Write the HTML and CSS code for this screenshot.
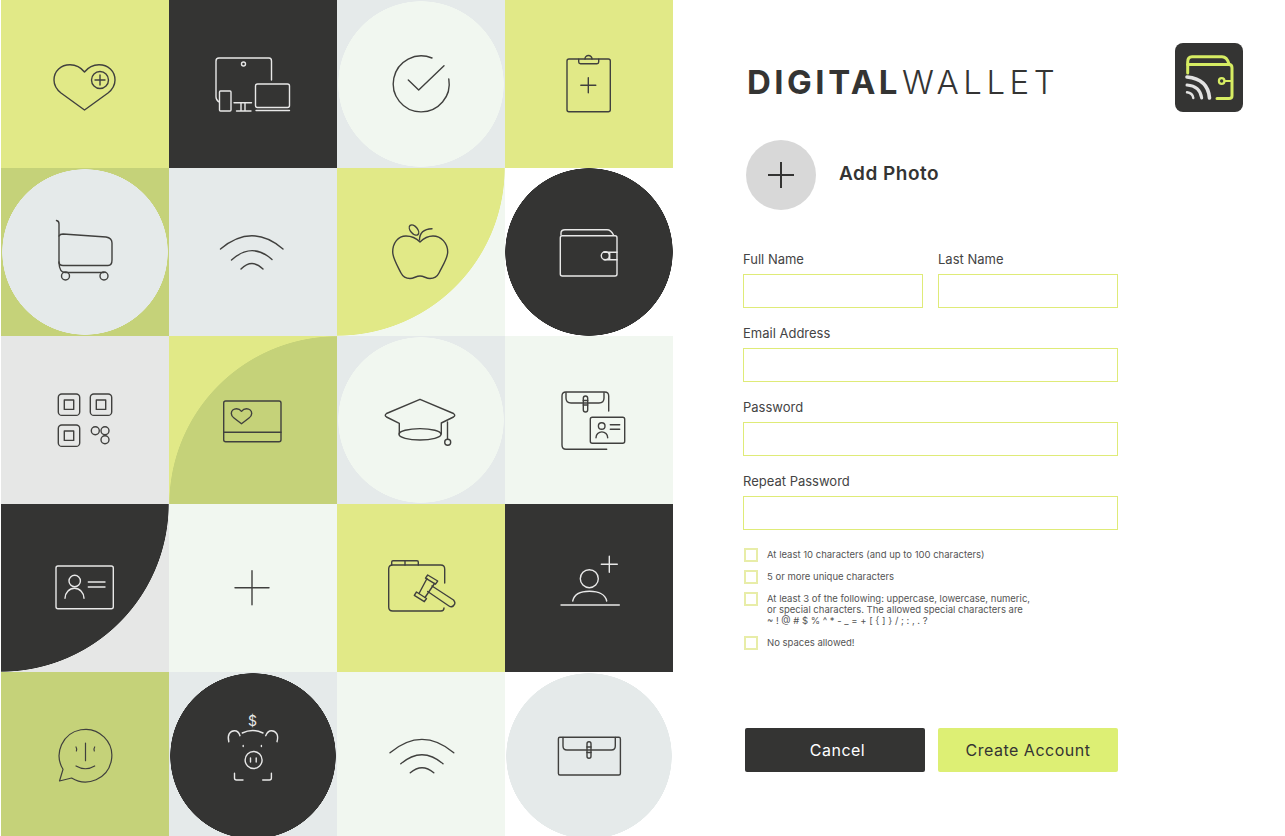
FILE: index.html
```html
<!DOCTYPE html>
<html lang="en">
<head>
    <meta charset="UTF-8">
    <meta name="viewport" content="width=device-width, initial-scale=1.0">
    <title>Digital Wallet - Create Account</title>
    <link rel="stylesheet" href="styles.css">
</head>
<body>
    <div class="mosaic">
        <!-- row 1 -->
        <div class="cell lime">
            <svg class="icon" viewBox="1 0 168 168">
                <path d="M84.5 110 L61 93 C56 89 54 85 54 80 C54 71 61 64.7 70 64.7 C76 64.7 81 67.5 84.5 72 C88 67.5 93 64.7 99 64.7 C108 64.7 115 71 115 80 C115 85 113 89 108 93 Z"/>
                <circle cx="100" cy="80" r="8.5"/>
                <path d="M95 80 H105 M100 75 V85"/>
            </svg>
        </div>
        <div class="cell dark">
            <svg class="icon light" viewBox="169 0 168 168">
                <path d="M271.5 80 V61 Q271.5 58 269 58 H219 Q216 58 216 61 V97 Q216 100 219 102"/>
                <circle cx="243.5" cy="64" r="2"/>
                <rect x="219.5" y="91" width="11.5" height="20" rx="1"/>
                <path d="M234 102.7 H251.5 M241 103 V110.5 M245 103 V110.5 M236.5 111 H251"/>
                <rect x="255.5" y="84" width="34" height="23.5" rx="2"/>
                <path d="M256 110.5 H289.5"/>
            </svg>
        </div>
        <div class="cell disc-pale">
            <svg class="icon" viewBox="337 0 168 168">
                <path d="M432 58 A28 28 0 1 0 448.8 79"/>
                <path d="M408.3 80 L418.7 90 L444 65.7"/>
            </svg>
        </div>
        <div class="cell lime">
            <svg class="icon" viewBox="505 0 168 168">
                <rect x="567" y="59" width="43.3" height="52.7" rx="2"/>
                <path d="M578.7 59.3 V62 Q578.7 63.7 580.5 63.7 H597 Q598.7 63.7 598.7 62 V59.3"/>
                <path d="M585 59 A3.5 3.5 0 0 1 592 59"/>
                <path d="M580.8 85.3 H595.8 M588.3 77.8 V92.8"/>
            </svg>
        </div>

        <!-- row 2 -->
        <div class="cell disc-mist">
            <svg class="icon" viewBox="1 168 168 168">
                <path d="M56.5 220.5 Q59 221 59 224 V263 Q59.5 272.5 65 272.5 H104"/>
                <path d="M59 236 Q60 234 63 234 L106 237 Q112 238 112 243 V260 Q112 265.5 108 265.5 H63 Q59 265.5 59 262"/>
                <circle cx="65.5" cy="276" r="4"/>
                <circle cx="104" cy="276" r="4"/>
            </svg>
        </div>
        <div class="cell mist">
            <svg class="icon" viewBox="169 168 168 168">
                <path d="M220.5 249 Q252 222.5 283 249"/>
                <path d="M231.5 260 Q252 241.5 272 259.5"/>
                <path d="M241 269 Q252 258 263 269"/>
            </svg>
        </div>
        <div class="cell corner-lime">
            <svg class="icon" viewBox="337 168 168 168">
                <path d="M420 242 C416 238 412 236 406 236 C398 236 392.7 243 392.7 252 C392.7 258 397 265 401 273 C403 277 406 278.5 410 278.5 C414 278.5 416 276 420 276 C424 276 426 278.5 430 278.5 C434 278.5 437 277 439 273 C443 265 447.7 258 447.7 252 C447.7 243 441 236 433 236 C428 236 424 238 420 242 Z"/>
                <path d="M419.5 240 C419.5 233 424 229 432 228.7"/>
                <ellipse cx="414" cy="230" rx="6" ry="3.5" transform="rotate(50 414 230)"/>
            </svg>
        </div>
        <div class="cell disc-dark">
            <svg class="icon light" viewBox="505 168 168 168">
                <rect x="560.3" y="235.7" width="56.7" height="40.3" rx="2"/>
                <path d="M561 235 V233 Q561 229.7 565 229.7 H607 Q611 229.7 613.5 235"/>
                <circle cx="605.3" cy="255.7" r="4"/>
                <path d="M604 252.3 H617 M604 259.7 H617 M609.7 252.3 V259.7"/>
            </svg>
        </div>

        <!-- row 3 -->
        <div class="cell ash">
            <svg class="icon" viewBox="1 336 168 168">
                <rect x="58.3" y="394" width="21.4" height="21.4" rx="3.5"/>
                <rect x="64.3" y="400" width="9.4" height="9.4"/>
                <rect x="90.3" y="394" width="21.4" height="21.4" rx="3.5"/>
                <rect x="96.3" y="400" width="9.4" height="9.4"/>
                <rect x="58.3" y="425" width="21.4" height="21.4" rx="3.5"/>
                <rect x="64.3" y="431" width="9.4" height="9.4"/>
                <circle cx="95.3" cy="430.7" r="4"/>
                <circle cx="105" cy="430.7" r="4"/>
                <circle cx="105" cy="439.7" r="4"/>
            </svg>
        </div>
        <div class="cell corner-olive">
            <svg class="icon" viewBox="169 336 168 168">
                <rect x="223.7" y="401" width="57.3" height="40.7" rx="2"/>
                <path d="M223.7 432.3 H281"/>
                <path d="M241.5 423.7 L234 418 C232 416.5 231.3 415 231.3 413.5 C231.3 410.7 233.7 408.7 236.5 408.7 C238.5 408.7 240.3 409.7 241.5 411.3 C242.7 409.7 244.5 408.7 246.5 408.7 C249.3 408.7 251.7 410.7 251.7 413.5 C251.7 415 251 416.5 249 418 Z"/>
            </svg>
        </div>
        <div class="cell disc-pale">
            <svg class="icon" viewBox="337 336 168 168">
                <path d="M399.3 434 V423.3 L386.5 417 Q384 415.3 386.5 413.5 L420 399.3 L453.5 413.5 Q456 415.3 453.5 417 L441.3 423 V434"/>
                <ellipse cx="420" cy="434.3" rx="21" ry="5.7"/>
                <path d="M447.5 422 V439.3"/>
                <circle cx="447.7" cy="442.3" r="3"/>
            </svg>
        </div>
        <div class="cell pale">
            <svg class="icon" viewBox="505 336 168 168">
                <path d="M608.7 411 V396 Q608.7 392 604.7 392 H566 Q562 392 562 396 V445 Q562 449.3 566 449.3 H606.7"/>
                <path d="M566 392.7 V398 Q566 403 571 403 H599 Q604 403 604 398 V392.7"/>
                <rect x="583.3" y="396" width="4.4" height="16" rx="2.2"/>
                <path d="M583.3 400.5 H587.7 M583.3 405 H587.7"/>
                <rect x="590.3" y="417.3" width="34.4" height="26" rx="2"/>
                <circle cx="601.7" cy="426" r="3.3"/>
                <path d="M596 437.7 A5.8 5.8 0 0 1 607.7 437.7"/>
                <path d="M610.3 424.7 H619.7 M610.3 429.3 H619.7"/>
            </svg>
        </div>

        <!-- row 4 -->
        <div class="cell corner-dark">
            <svg class="icon light" viewBox="1 504 168 168">
                <rect x="56" y="566" width="57.3" height="42.7" rx="2"/>
                <circle cx="74.7" cy="581" r="5.7"/>
                <path d="M65 598.3 A9.5 10 0 0 1 84 598.3"/>
                <path d="M88.3 582 H105 M88.3 587 H105"/>
            </svg>
        </div>
        <div class="cell pale">
            <svg class="icon" viewBox="169 504 168 168">
                <path d="M235 587.7 H269 M252 570.7 V604.7"/>
            </svg>
        </div>
        <div class="cell lime">
            <svg class="icon" viewBox="337 504 168 168">
                <path d="M444.7 583 V569 Q444.7 565 440.7 565 H392.7 Q388.7 565 388.7 569 V607 Q388.7 611 392.7 611 H441 Q444 611 444 608"/>
                <path d="M391.7 565 V562 Q391.7 560.7 393 560.7 H417 Q418.3 560.7 418.3 562 V565 M405 560.7 V565"/>
                <path d="M427.7 575 L437.7 581 L435.5 584.2 L425.5 578.2 Z"/>
                <path d="M416.5 592 L426.5 598.5 L424.3 601.7 L414.3 595.3 Z"/>
                <path d="M427 578.5 L419 593.5 M434.5 583.5 L425 597.5"/>
                <path d="M432 586 L453.5 600 Q456 603 454 605 Q452 608 449 606 L427.7 591.5"/>
            </svg>
        </div>
        <div class="cell dark">
            <svg class="icon light" viewBox="505 504 168 168">
                <circle cx="589.3" cy="578.7" r="9"/>
                <path d="M572.7 601 C574 595 580 591.3 589.5 591.3 C599 591.3 605.5 595 606.7 601"/>
                <path d="M561 605 H619.3"/>
                <path d="M601.3 564.3 H617.3 M609.3 556.3 V572.3"/>
            </svg>
        </div>

        <!-- row 5, cut off by the window -->
        <div class="cell olive">
            <svg class="icon thin" viewBox="1 672 168 168">
                <path d="M63 769.3 A26.3 26.3 0 1 1 71.6 778 L59.5 781 Z"/>
                <path d="M76 747 Q77.3 749 76.4 751 M94.7 747 Q93.4 749 94.3 751"/>
                <path d="M85.5 743 V760.7"/>
                <path d="M76 766 Q85.5 771.5 94.7 766"/>
            </svg>
        </div>
        <div class="cell disc-dark-mist">
            <svg class="icon light" viewBox="169 672 168 168">
                <text class="coin" x="252.5" y="726">$</text>
                <path d="M228.8 741.7 C227 735 230 730.7 234.5 730.7 C237 730.7 239 732.5 240 735.7"/>
                <path d="M277 741.7 C279 735 276 730.7 271.4 730.7 C269 730.7 267 732.5 265.7 735.7"/>
                <path d="M242.3 733 Q252.6 728 263 733"/>
                <path d="M243.2 745.4 V746.6 M261.4 745.4 V746.6"/>
                <circle cx="253.6" cy="760" r="8.5"/>
                <path d="M250.5 758 V762 M256.2 758 V762"/>
                <path d="M234.5 773.3 V778 Q234.5 780 236.5 780 H243 M271.4 773.3 V778 Q271.4 780 269.4 780 H262.7"/>
            </svg>
        </div>
        <div class="cell pale">
            <svg class="icon" viewBox="337 672 168 168">
                <path d="M390 752.7 Q422 726 453.8 752.7"/>
                <path d="M400.8 763.7 Q422 745.7 443 763.7"/>
                <path d="M410.3 772.7 Q422 762.7 433.8 772.7"/>
            </svg>
        </div>
        <div class="cell disc-mist-white">
            <svg class="icon" viewBox="505 672 168 168">
                <rect x="558.4" y="737.3" width="62" height="37.7" rx="1.5"/>
                <path d="M563 737.5 V746 Q563 750 567 750 H611.3 Q615.3 750 615.3 746 V737.5"/>
                <rect x="587" y="741.7" width="4" height="16.6" rx="2"/>
                <path d="M587 747 H591 M587 752.5 H591"/>
            </svg>
        </div>
    </div>

    <main class="panel">
        <header class="panel-head">
            <h1 class="brand"><b>DIGITAL</b>WALLET</h1>
            <svg class="logo" viewBox="1175 43 68 69">
                <rect x="1175" y="43" width="68" height="69" rx="8" fill="#343433"/>
                <g fill="none" stroke="#d6ec63" stroke-width="3" stroke-linecap="round">
                    <path d="M1187.7 73 V62 Q1187.7 56.7 1192 56.7 H1222 Q1227 56.7 1229 64"/>
                    <path d="M1187.7 64.5 H1229 Q1232 64.5 1232 68 V96 Q1232 98.5 1229 98.5 H1217"/>
                    <circle cx="1221.7" cy="81" r="2.8" stroke-width="2.2"/>
                    <path d="M1224.5 81 H1232" stroke-width="2.2"/>
                </g>
                <g fill="none" stroke="#e2e2e2" stroke-linecap="round">
                    <path d="M1187 77 Q1208 79 1209.5 98" stroke-width="3.6"/>
                    <path d="M1187 85 Q1200 86 1201.7 98" stroke-width="3"/>
                    <path d="M1187 92.3 Q1192.5 93 1193.3 98" stroke-width="2.4"/>
                </g>
            </svg>
        </header>

        <div class="add-photo">
            <span class="photo-btn">
                <svg class="photo-plus" viewBox="0 0 28 28"><path d="M1 14 H27 M14 1 V27"/></svg>
            </span>
            <span class="photo-label">Add Photo</span>
        </div>

        <form class="signup">
            <div class="row">
                <label class="field">Full Name<input type="text"></label>
                <label class="field">Last Name<input type="text"></label>
            </div>
            <label class="field">Email Address<input type="email"></label>
            <label class="field">Password<input type="password"></label>
            <label class="field">Repeat Password<input type="password"></label>

            <ul class="rules">
                <li><input type="checkbox"><span>At least 10 characters (and up to 100 characters)</span></li>
                <li><input type="checkbox"><span>5 or more unique characters</span></li>
                <li><input type="checkbox"><span>At least 3 of the following: uppercase, lowercase, numeric,<br>or special characters. The allowed special characters are<br>~ ! @ # $ % ^ * - _ = + [ { ] } / ; : , . ?</span></li>
                <li><input type="checkbox"><span>No spaces allowed!</span></li>
            </ul>

            <div class="actions">
                <button type="button" class="btn btn-cancel">Cancel</button>
                <button type="submit" class="btn btn-create">Create Account</button>
            </div>
        </form>
    </main>
</body>
</html>
```

FILE: styles.css
```css
body {
    margin: 0;
    height: 836px;
    display: flex;
    overflow: hidden;
    background: white;
    font-family: Inter, "Noto Sans", sans-serif;
    color: #343433;
}

/* left picture wall */
.mosaic {
    flex: none;
    height: 836px;
    padding-left: 1px;
    display: grid;
    grid-template-columns: repeat(4, 168px);
    grid-auto-rows: 168px;
    overflow: hidden;
}
.cell {
    display: flex;
}
.lime { background: #e1e987; }
.dark { background: #343433; }
.mist { background: #e5eaea; }
.pale { background: #f1f7f0; }
.ash { background: #e6e7e6; }
.olive { background: #c5d279; }
.disc-pale { background: radial-gradient(circle 83px, #f1f7f0 99.4%, #e5eaea 100%); }
.disc-mist { background: radial-gradient(circle 83px, #e5eaea 99.4%, #c5d279 100%); }
.disc-dark { background: radial-gradient(circle 84px, #343433 99.4%, white 100%); }
.disc-dark-mist { background: radial-gradient(circle 83px, #343433 99.4%, #e5eaea 100%); }
.disc-mist-white { background: radial-gradient(circle 83px, #e5eaea 99.4%, white 100%); }
.corner-lime { background: radial-gradient(circle 168px at 0 0, #e1e987 99.6%, #f1f7f0 100%); }
.corner-olive { background: radial-gradient(circle 168px at 100% 100%, #c5d279 99.6%, #e1e987 100%); }
.corner-dark { background: radial-gradient(circle 168px at 0 0, #343433 99.6%, #e6e7e6 100%); }

.icon {
    display: block;
    width: 168px;
    height: 168px;
    fill: none;
    stroke: #40403e;
    stroke-width: 1.4;
    stroke-linecap: round;
    stroke-linejoin: round;
}
.icon.light { stroke: #e8e8e8; }
.icon.thin { stroke-width: 1.2; }
.coin {
    fill: #e8e8e8;
    stroke: none;
    font-size: 14px;
    text-anchor: middle;
}

/* right form panel */
.panel {
    flex: none;
    width: 612px;
    box-sizing: border-box;
    padding: 43px 42px 0 70px;
}
.panel-head {
    display: flex;
    justify-content: space-between;
    align-items: flex-start;
    height: 97px;
}
.brand {
    margin: 19px 0 0 4px;
    font-size: 33px;
    line-height: 40px;
    font-weight: 300;
    letter-spacing: 4.5px;
    color: #343433;
}
.brand b {
    font-weight: 700;
    letter-spacing: 3.5px;
    margin-right: 1px;
}
.logo {
    width: 68px;
    height: 69px;
}

.add-photo {
    display: flex;
    align-items: center;
    gap: 23px;
    margin-left: 3px;
}
.photo-btn {
    width: 70px;
    height: 70px;
    border-radius: 50%;
    background: #d8d8d8;
    display: flex;
    align-items: center;
    justify-content: center;
}
.photo-plus {
    width: 28px;
    height: 28px;
    fill: none;
    stroke: #343433;
    stroke-width: 2;
}
.photo-label {
    margin-bottom: 3px;
    font-size: 19px;
    font-weight: 600;
    letter-spacing: 0.5px;
}

.signup {
    width: 375px;
    margin-top: 40px;
    display: flex;
    flex-direction: column;
    gap: 16px;
}
.row {
    display: flex;
    gap: 15px;
}
.row .field {
    flex: 1;
}
.field {
    display: block;
    font-size: 13px;
    line-height: 18px;
    color: #444;
}
.field input {
    display: block;
    box-sizing: border-box;
    width: 100%;
    height: 34px;
    margin: 6px 0 0;
    padding: 0 8px;
    border: 1px solid #dfeb78;
    border-radius: 0;
    background: white;
}

.rules {
    list-style: none;
    margin: 2px 0 0 1px;
    padding: 0;
    display: flex;
    flex-direction: column;
    gap: 8px;
    font-size: 9.5px;
    line-height: 11px;
    color: #555;
}
.rules li {
    display: flex;
    gap: 9px;
    min-height: 14px;
}
.rules input {
    appearance: none;
    flex: none;
    box-sizing: border-box;
    width: 14px;
    height: 14px;
    margin: 0;
    border: 2px solid #e8eda8;
}
.rules span {
    padding: 0.5px 0 2.5px;
}

.actions {
    display: flex;
    gap: 13px;
    margin-top: 62px;
    margin-left: 2px;
}
.btn {
    flex: none;
    width: 180px;
    height: 44px;
    box-sizing: border-box;
    border: none;
    border-radius: 2px;
    font-family: inherit;
    font-size: 16px;
    letter-spacing: 0.5px;
}
.btn-cancel {
    padding-left: 11px;
    background: #343433;
    color: white;
}
.btn-create {
    background: #ddef74;
    color: #343433;
}
```
